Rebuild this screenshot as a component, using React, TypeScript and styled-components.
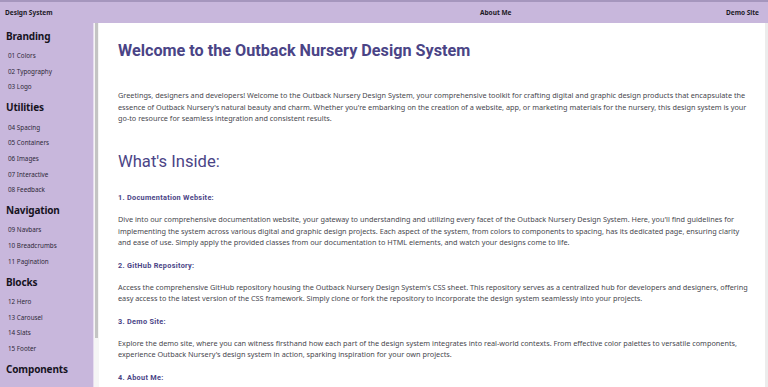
import React from "react";
import styled, { createGlobalStyle } from "styled-components";

const lavender = "#c8b7dc";
const purple = "#4a4486";

const GlobalStyle = createGlobalStyle`
  html, body {
    margin: 0;
    padding: 0;
    height: 100%;
    overflow: hidden;
  }
  #root {
    height: 100%;
  }
  * {
    box-sizing: border-box;
  }
`;

const Page = styled.div`
  display: flex;
  flex-direction: column;
  height: 100vh;
  font-family: "Noto Sans", "Open Sans", sans-serif;
`;

const TopBar = styled.header`
  display: flex;
  align-items: center;
  justify-content: space-between;
  height: 23px;
  flex-shrink: 0;
  padding: 0 9px 0 5px;
  background: ${lavender};
  border-top: 2px solid #a596bd;
`;

const Brand = styled.a`
  font-size: 6.5px;
  font-weight: 700;
  color: #1d1a26;
`;

const NavLinks = styled.nav`
  display: flex;
  justify-content: space-between;
  width: 279px;
`;

const NavLink = styled.a`
  font-size: 6.5px;
  font-weight: 700;
  color: #1d1a26;
`;

const Body = styled.div`
  display: flex;
  flex: 1;
  min-height: 0;
`;

const Sidebar = styled.aside`
  display: flex;
  width: 99px;
  flex-shrink: 0;
  background: ${lavender};
  overflow: hidden;
`;

const SideNav = styled.nav`
  flex: 1;
  padding-top: 0.5px;
`;

const ScrollRail = styled.div`
  width: 6px;
  flex-shrink: 0;
  background: #f5f5f5;
  border-left: 1px solid #e6dcef;
  padding: 0 1px 0 1px;
`;

const ScrollThumb = styled.div<{ $size: number }>`
  height: ${(p) => p.$size}px;
  background: #c4c4c4;
`;

const Group = styled.section`
  display: flex;
  flex-direction: column;
`;

const GroupTitle = styled.h2`
  margin: 4.3px 0 4.3px 6px;
  font-size: 10px;
  line-height: 16px;
  font-weight: 700;
  color: #17141f;
  letter-spacing: -0.15px;
`;

const SideLink = styled.a`
  display: block;
  height: 15.65px;
  line-height: 15.65px;
  padding-left: 8px;
  font-size: 6.3px;
  color: #2e2938;
  white-space: nowrap;
`;

const Main = styled.main`
  flex: 1;
  min-width: 0;
  overflow: hidden;
  background: #fff;
  border-right: 3px solid #ececec;
  padding: 16px 14px 40px 19px;
`;

const Title = styled.h1`
  margin: 0;
  font-family: Roboto, "Liberation Sans", sans-serif;
  font-size: 16.2px;
  line-height: 24px;
  font-weight: 700;
  color: ${purple};
`;

const SectionTitle = styled.h2`
  margin: 26px 0 0;
  font-family: Roboto, "Liberation Sans", sans-serif;
  font-size: 16.6px;
  line-height: 22px;
  font-weight: 400;
  color: ${purple};
`;

const ItemTitle = styled.h3<{ $first?: boolean }>`
  margin: ${(p) => (p.$first ? "19.5px" : "11px")} 0 0;
  font-family: Roboto, "Liberation Sans", sans-serif;
  font-size: 7.3px;
  line-height: 12px;
  font-weight: 700;
  letter-spacing: 0.3px;
  color: ${purple};
`;

const Text = styled.p<{ $gap: number }>`
  margin: ${(p) => p.$gap}px 0 0;
  font-size: 7.29px;
  line-height: 11.5px;
  color: #47474e;
`;

const nav = [
  { title: "Branding", links: ["01 Colors", "02 Typography", "03 Logo"] },
  {
    title: "Utilities",
    links: ["04 Spacing", "05 Containers", "06 Images", "07 Interactive", "08 Feedback"],
  },
  { title: "Navigation", links: ["09 Navbars", "10 Breadcrumbs", "11 Pagination"] },
  { title: "Blocks", links: ["12 Hero", "13 Carousel", "14 Slats", "15 Footer"] },
  { title: "Components", links: [] as string[] },
];

const items = [
  {
    title: "1. Documentation Website:",
    text: "Dive into our comprehensive documentation website, your gateway to understanding and utilizing every facet of the Outback Nursery Design System. Here, you'll find guidelines for implementing the system across various digital and graphic design projects. Each aspect of the system, from colors to components to spacing, has its dedicated page, ensuring clarity and ease of use. Simply apply the provided classes from our documentation to HTML elements, and watch your designs come to life.",
  },
  {
    title: "2. GitHub Repository:",
    text: "Access the comprehensive GitHub repository housing the Outback Nursery Design System's CSS sheet. This repository serves as a centralized hub for developers and designers, offering easy access to the latest version of the CSS framework. Simply clone or fork the repository to incorporate the design system seamlessly into your projects.",
  },
  {
    title: "3. Demo Site:",
    text: "Explore the demo site, where you can witness firsthand how each part of the design system integrates into real-world contexts. From effective color palettes to versatile components, experience Outback Nursery's design system in action, sparking inspiration for your own projects.",
  },
  { title: "4. About Me:", text: "" },
];

export default function App() {
  return (
    <Page>
      <GlobalStyle />
      <TopBar>
        <Brand>Design System</Brand>
        <NavLinks>
          <NavLink>About Me</NavLink>
          <NavLink>Demo Site</NavLink>
        </NavLinks>
      </TopBar>
      <Body>
        <Sidebar>
          <SideNav>
            {nav.map((g) => (
              <Group key={g.title}>
                <GroupTitle>{g.title}</GroupTitle>
                {g.links.map((l) => (
                  <SideLink key={l}>{l}</SideLink>
                ))}
              </Group>
            ))}
          </SideNav>
          <ScrollRail>
            <ScrollThumb $size={315} />
          </ScrollRail>
        </Sidebar>
        <Main>
          <Title>Welcome to the Outback Nursery Design System</Title>
          <Text $gap={27}>
            Greetings, designers and developers! Welcome to the Outback Nursery Design System, your
            comprehensive toolkit for crafting digital and graphic design products that encapsulate
            the essence of Outback Nursery's natural beauty and charm. Whether you're embarking on
            the creation of a website, app, or marketing materials for the nursery, this design
            system is your go-to resource for seamless integration and consistent results.
          </Text>
          <SectionTitle>What's Inside:</SectionTitle>
          {items.map((it, i) => (
            <React.Fragment key={it.title}>
              <ItemTitle $first={i === 0}>{it.title}</ItemTitle>
              {it.text && <Text $gap={10}>{it.text}</Text>}
            </React.Fragment>
          ))}
        </Main>
      </Body>
    </Page>
  );
}
